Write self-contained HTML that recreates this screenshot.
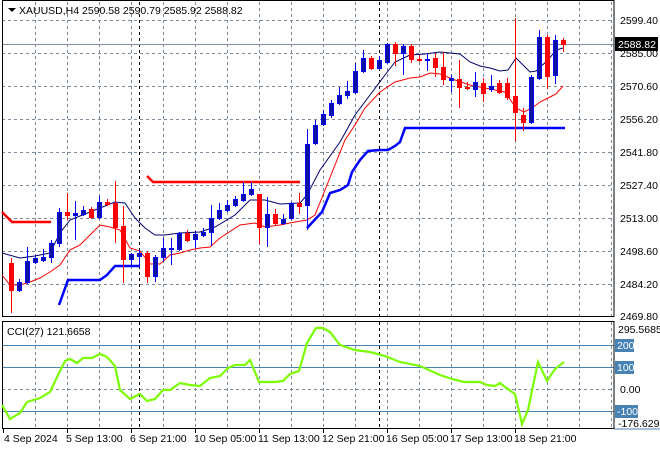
<!DOCTYPE html>
<html><head><meta charset="utf-8"><style>
html,body{margin:0;padding:0;background:#fff;width:660px;height:450px;overflow:hidden}
svg{display:block;font-family:"Liberation Sans",sans-serif;font-size:10.5px}
</style></head><body>
<svg width="660" height="450" xmlns="http://www.w3.org/2000/svg">
<g stroke="#7a8a99" stroke-dasharray="3,3" stroke-width="1" fill="none">
<path d="M35.5 2V316M67.5 2V316M99.5 2V316M131.5 2V316M163.5 2V316M195.5 2V316M227.5 2V316M259.5 2V316M291.5 2V316M323.5 2V316M355.5 2V316M387.5 2V316M419.5 2V316M451.5 2V316M483.5 2V316M515.5 2V316M547.5 2V316M579.5 2V316M611.5 2V316"/>
<path d="M2 20.5H614M2 53.5H614M2 86.5H614M2 119.5H614M2 152.5H614M2 185.5H614M2 218.5H614M2 251.5H614M2 284.5H614"/>
<path d="M35.5 322V428M67.5 322V428M99.5 322V428M131.5 322V428M163.5 322V428M195.5 322V428M227.5 322V428M259.5 322V428M291.5 322V428M323.5 322V428M355.5 322V428M387.5 322V428M419.5 322V428M451.5 322V428M483.5 322V428M515.5 322V428M547.5 322V428M579.5 322V428M611.5 322V428"/>
<path d="M2 389.5H614"/>
</g>
<g stroke="#000" stroke-dasharray="3,3"><path d="M139.5 2V316M379.5 2V316M139.5 322V428M379.5 322V428"/></g>
<path d="M2 44.5H614" stroke="#8090a0"/>
<g stroke="#4682b4"><path d="M2 345.5H614M2 367.5H614M2 411.5H614"/></g>
<rect x="2.5" y="0.5" width="611.5" height="316" fill="none" stroke="#000"/>
<rect x="2.5" y="321.5" width="611.5" height="107" fill="none" stroke="#000"/>
<g stroke-width="1">
<path d="M2 212L12 222H51" stroke="#f00" stroke-width="2.5" fill="none"/>
<path d="M147 176L153 182H300" stroke="#f00" stroke-width="2.5" fill="none"/>
<path d="M59 305L68 280H100L107 275L115 266H140" stroke="#0000ff" stroke-width="2.5" fill="none"/>
<path d="M307 228L322 212L330 193L340 190L348 185L352 172L360 160L368 151L380 150L388 150L395 146L400 142L405 128L565 128" stroke="#0000ff" stroke-width="2.5" fill="none"/>
<polyline fill="none" stroke="#00006e" points="2,253 20,258 35,256 50,253 60,233 70,220 90,212 105,206 115,202 125,203 135,218 145,228 155,235 165,235 180,233 200,232 215,227 235,215 250,200 265,200 280,204 300,203 307,195 320,170 340,142 355,115 370,95 385,75 395,62 410,55 425,54 440,52 460,54 470,62 480,66 490,68 500,71 508,70 516,58 530,72 536,71 548,60 556,50 563,48"/>
<polyline fill="none" stroke="#f00" points="2,275 10,285 20,285 30,282 40,278 50,272 60,265 70,250 80,245 100,225 110,227 120,230 130,248 140,251 150,264 160,264 170,255 180,253 190,250 200,248 210,247 220,238 240,225 255,223 265,227 280,225 295,222 307,220 315,215 325,190 335,165 345,140 355,125 365,108 380,92 395,82 410,78 420,77 430,73 440,74 455,80 470,85 490,89 505,92 516,108 524,112 532,108 540,102 548,98 556,94 563,86"/>
</g>
<g id="c"></g>
<polyline fill="none" stroke="#7cfc00" stroke-width="2.2" points="2,405 10,419 20,413 27,402 40,398 50,392 58,375 65,361 70,359 77,363 83,358 92,358 100,354 107,357 115,366 120,390 130,399 140,394 147,401 155,399 163,390 170,390 180,383 190,385 200,386 210,378 220,376 228,368 235,365 245,365 250,360 259,382 275,382 283,381 290,374 299,371 307,343 316,328 323,328 330,332 340,345 355,350 370,352 385,356 400,362 420,366 440,375 452,379 464,382 480,382 487,385 495,386 500,383 505,387 515,394 522,424 528,410 538,362 547,381 555,369 564,362"/>
<g fill="#000">
<text x="620" y="24">2599.40</text><text x="620" y="57">2585.00</text><text x="620" y="90">2570.60</text><text x="620" y="123">2556.20</text><text x="620" y="156">2541.80</text><text x="620" y="189">2527.40</text><text x="620" y="222">2513.00</text><text x="620" y="255">2498.60</text><text x="620" y="288">2484.20</text><text x="620" y="320">2469.80</text>
<text x="618" y="333">295.5685</text><text x="620" y="393">0.00</text><text x="618" y="427">-176.629</text>
</g>
<rect x="615" y="37" width="43" height="14" fill="#000"/><text x="618" y="48" fill="#fff">2588.82</text>
<g fill="#4682b4"><rect x="615" y="339" width="19" height="13"/><rect x="615" y="361" width="19" height="13"/><rect x="615" y="405" width="23" height="13"/></g>
<g fill="#fff"><text x="617" y="349">200</text><text x="617" y="371">100</text><text x="617" y="415">-100</text></g>
<path d="M614 429H660" stroke="#4682b4"/>
<path d="M8 8L12 12L16 8Z" fill="#000"/>
<text x="19" y="14" fill="#000">XAUUSD,H4  2590.58 2590.79 2585.92 2588.82</text>
<text x="7" y="335" fill="#000">CCI(27) 121.6658</text>
<g stroke="#000"><path d="M3.5 428V433M67.5 428V433M131.5 428V433M195.5 428V433M259.5 428V433M323.5 428V433M387.5 428V433M451.5 428V433M515.5 428V433"/></g>
<g fill="#000">
<text x="4" y="442">4 Sep 2024</text><text x="66" y="442">5 Sep 13:00</text><text x="130" y="442">6 Sep 21:00</text><text x="194" y="442">10 Sep 05:00</text><text x="258" y="442">11 Sep 13:00</text><text x="322" y="442">12 Sep 21:00</text><text x="386" y="442">16 Sep 05:00</text><text x="450" y="442">17 Sep 13:00</text><text x="514" y="442">18 Sep 21:00</text>
</g>
<g stroke-width="1">
<path stroke="#0000ff" d="M19.5 279V292M27.5 247V284M35.5 255V264M43.5 249V262M51.5 240V263M59.5 208V247M75.5 201V240M83.5 206V216M99.5 196V219M131.5 253V266M139.5 250V267M155.5 255V282M163.5 238V262M171.5 238V265M179.5 232V251M195.5 231V248M203.5 228V237M211.5 205V246M219.5 203V220M227.5 200V212M235.5 196V207M243.5 182V202M251.5 182V196M267.5 197V247M283.5 214V225M291.5 202V220M307.5 129V230M315.5 120V145M323.5 110V126M331.5 100V118M339.5 87V105M347.5 81V99M355.5 63V94M363.5 50V73M379.5 56V70M387.5 43V64M403.5 44V75M427.5 53V71M451.5 75V92M475.5 72V97M491.5 75V92M531.5 75V124M539.5 30V80M555.5 35V84"/>
<path stroke="#f00" d="M11.5 258V313M67.5 193V220M91.5 207V219M107.5 199V206M115.5 181V243M123.5 206V283M147.5 251V283M187.5 230V242M259.5 194V244M275.5 209V225M299.5 193V214M371.5 56V70M395.5 42V66M411.5 44V63M419.5 55V62M435.5 53V77M443.5 52V85M459.5 60V108M467.5 82V90M483.5 78V102M499.5 80V94M507.5 78V100M515.5 18V141M523.5 108V131M547.5 35V89M563.5 38V52"/>
<g fill="#10109a" stroke="#0000ff">
<rect x="17.5" y="282.5" width="4" height="8"/><rect x="25.5" y="261.5" width="4" height="21"/><rect x="33.5" y="258.5" width="4" height="4"/><rect x="41.5" y="257.5" width="4" height="3"/><rect x="49.5" y="243.5" width="4" height="14"/><rect x="57.5" y="212.5" width="4" height="31"/><rect x="73.5" y="213.5" width="4" height="2"/><rect x="81.5" y="210.5" width="4" height="4"/><rect x="97.5" y="202.5" width="4" height="15"/><rect x="129.5" y="254.5" width="4" height="5"/><rect x="137.5" y="253.5" width="4" height="3"/><rect x="153.5" y="257.5" width="4" height="19"/><rect x="161.5" y="248.5" width="4" height="9"/><rect x="169.5" y="248.5" width="4" height="1"/><rect x="177.5" y="233.5" width="4" height="16"/><rect x="193.5" y="234.5" width="4" height="5"/><rect x="201.5" y="232.5" width="4" height="3"/><rect x="209.5" y="218.5" width="4" height="14"/><rect x="217.5" y="210.5" width="4" height="8"/><rect x="225.5" y="205.5" width="4" height="5"/><rect x="233.5" y="199.5" width="4" height="6"/><rect x="241.5" y="194.5" width="4" height="6"/><rect x="249.5" y="189.5" width="4" height="5"/><rect x="265.5" y="214.5" width="4" height="13"/><rect x="281.5" y="219.5" width="4" height="4"/><rect x="289.5" y="203.5" width="4" height="15"/><rect x="305.5" y="144.5" width="4" height="61"/><rect x="313.5" y="125.5" width="4" height="18"/><rect x="321.5" y="114.5" width="4" height="10"/><rect x="329.5" y="103.5" width="4" height="12"/><rect x="337.5" y="95.5" width="4" height="8"/><rect x="345.5" y="91.5" width="4" height="4"/><rect x="353.5" y="71.5" width="4" height="21"/><rect x="361.5" y="58.5" width="4" height="13"/><rect x="377.5" y="60.5" width="4" height="8"/><rect x="385.5" y="44.5" width="4" height="18"/><rect x="401.5" y="46.5" width="4" height="7"/><rect x="425.5" y="59.5" width="4" height="1"/><rect x="449.5" y="78.5" width="4" height="2"/><rect x="473.5" y="82.5" width="4" height="7"/><rect x="489.5" y="86.5" width="4" height="3"/><rect x="529.5" y="77.5" width="4" height="45"/><rect x="537.5" y="37.5" width="4" height="41"/><rect x="553.5" y="40.5" width="4" height="35"/>
</g>
<g fill="#f00" stroke="#f00">
<rect x="9.5" y="263.5" width="4" height="27"/><rect x="65.5" y="212.5" width="4" height="3"/><rect x="89.5" y="209.5" width="4" height="8"/><rect x="105.5" y="202.5" width="4" height="2"/><rect x="113.5" y="203.5" width="4" height="24"/><rect x="121.5" y="226.5" width="4" height="33"/><rect x="145.5" y="253.5" width="4" height="23"/><rect x="185.5" y="233.5" width="4" height="7"/><rect x="257.5" y="194.5" width="4" height="33"/><rect x="273.5" y="214.5" width="4" height="9"/><rect x="297.5" y="203.5" width="4" height="3"/><rect x="369.5" y="58.5" width="4" height="10"/><rect x="393.5" y="44.5" width="4" height="9"/><rect x="409.5" y="46.5" width="4" height="13"/><rect x="417.5" y="59.5" width="4" height="1"/><rect x="433.5" y="58.5" width="4" height="9"/><rect x="441.5" y="67.5" width="4" height="12"/><rect x="457.5" y="79.5" width="4" height="8"/><rect x="465.5" y="87.5" width="4" height="1"/><rect x="481.5" y="83.5" width="4" height="10"/><rect x="497.5" y="83.5" width="4" height="9"/><rect x="505.5" y="83.5" width="4" height="14"/><rect x="513.5" y="96.5" width="4" height="16"/><rect x="521.5" y="115.5" width="4" height="7"/><rect x="545.5" y="37.5" width="4" height="39"/><rect x="561.5" y="40.5" width="4" height="4"/>
</g>
</g>
</svg>
</body></html>
